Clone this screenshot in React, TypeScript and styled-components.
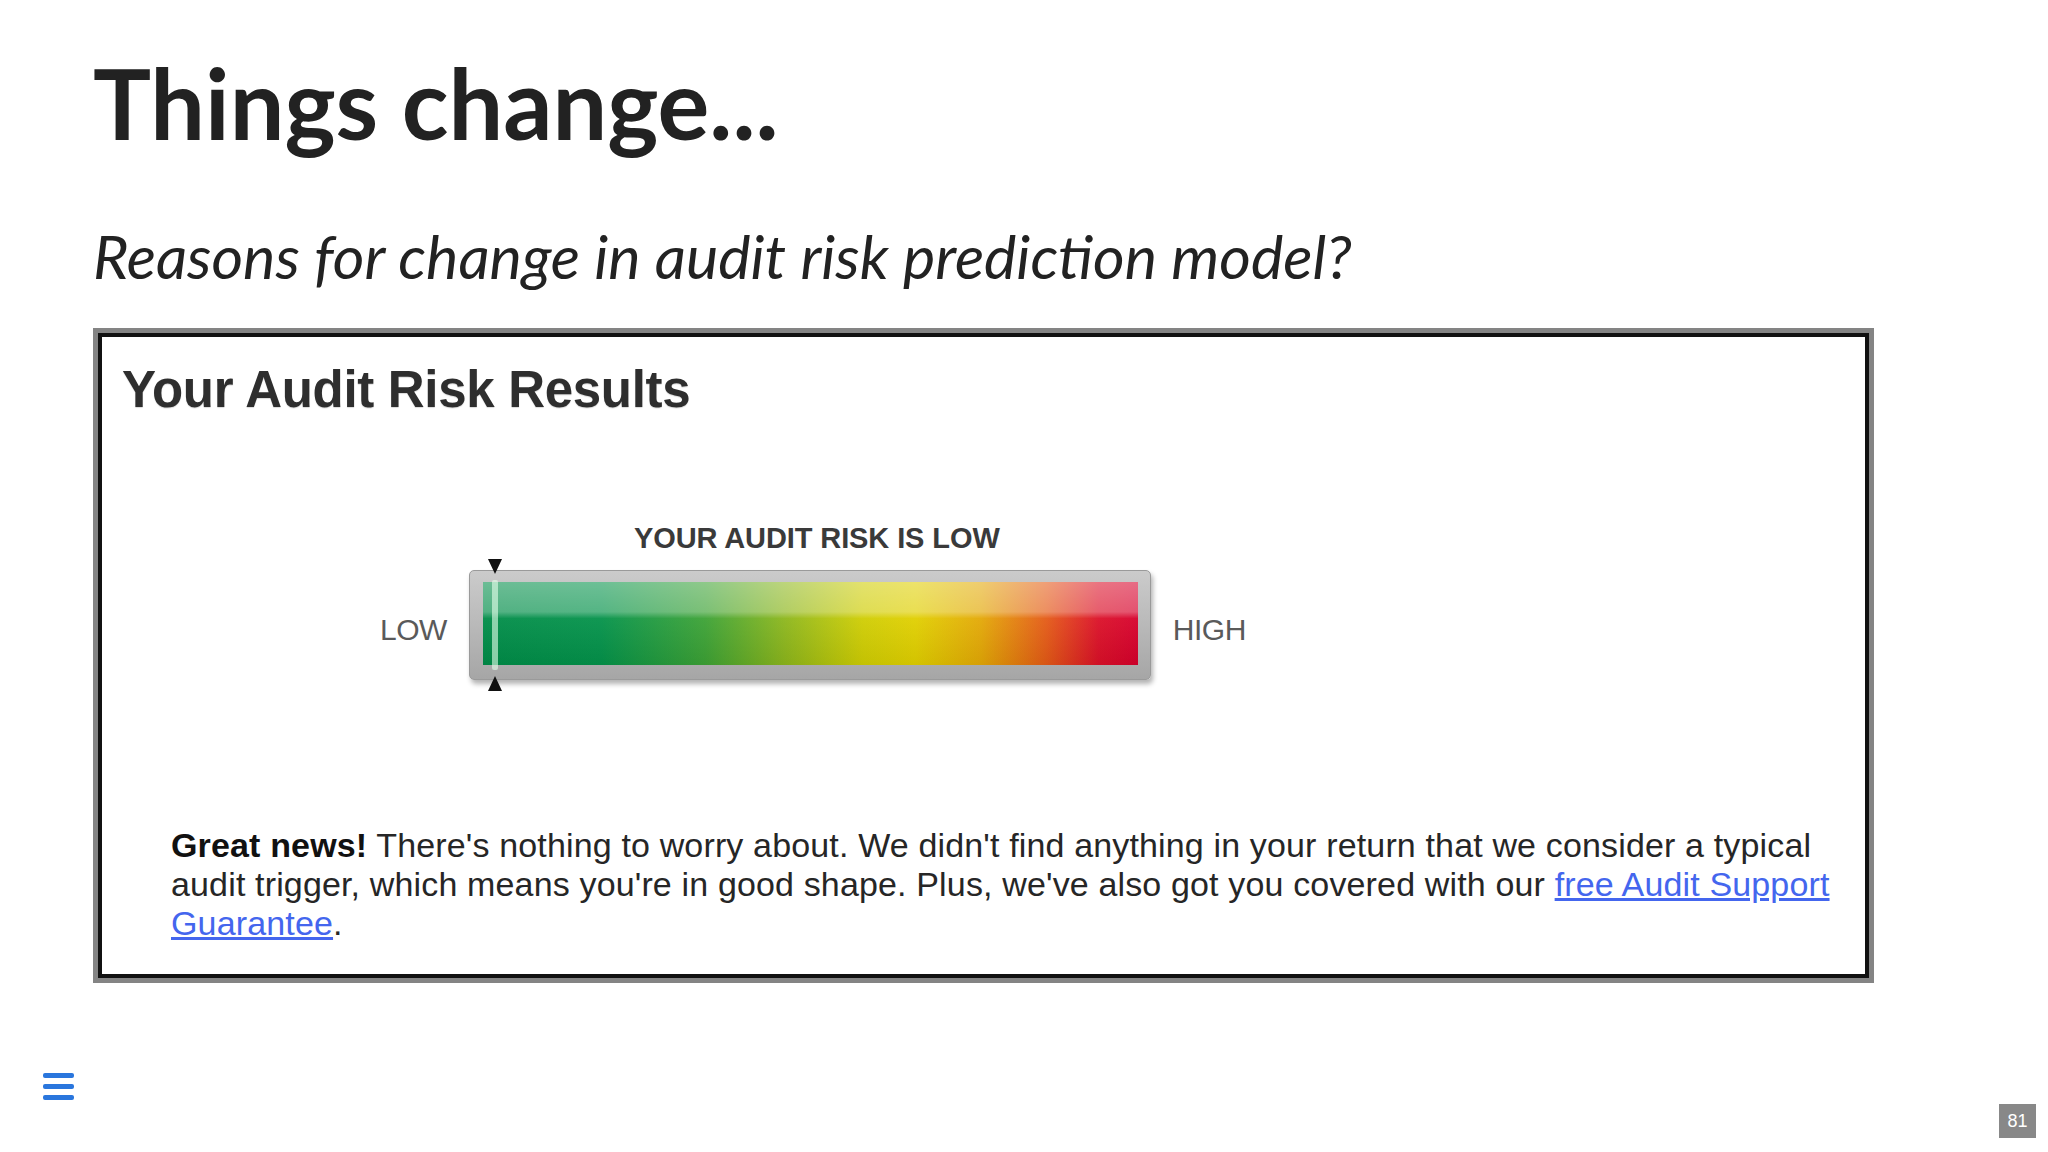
import React from 'react';
import styled, { createGlobalStyle } from 'styled-components';

const GlobalStyle = createGlobalStyle`
  html, body {
    margin: 0;
    padding: 0;
    background: #ffffff;
  }
  body {
    width: 2048px;
    height: 1152px;
    overflow: hidden;
  }
`;

const App = () => {
  return (
    <Slide>
      <GlobalStyle />
      <Title>Things change...</Title>
      <Subtitle>Reasons for change in audit risk prediction model?</Subtitle>
      <Screenshot>
        <ResultsHeading>Your Audit Risk Results</ResultsHeading>
        <Meter>
          <Caption>YOUR AUDIT RISK IS LOW</Caption>
          <MeterRow>
            <EndLabel>LOW</EndLabel>
            <BarFrame>
              <BarFill>
                <Gloss />
              </BarFill>
              <Marker $pos={25}>
                <svg width="16" height="134" viewBox="0 0 16 134">
                  <polygon points="1,1 15,1 8,16" fill="#111" />
                  <rect x="7" y="1" width="2" height="12" fill="#111" />
                  <polygon points="1,133 15,133 8,118" fill="#111" />
                  <rect x="7" y="121" width="2" height="12" fill="#111" />
                </svg>
              </Marker>
            </BarFrame>
            <EndLabel>HIGH</EndLabel>
          </MeterRow>
        </Meter>
        <Message>
          <strong>Great news!</strong> There's nothing to worry about. We didn't find anything in your return that we consider a typical
          <br />
          audit trigger, which means you're in good shape. Plus, we've also got you covered with our{' '}
          <LinkText href="#">free Audit Support</LinkText>
          <br />
          <LinkText href="#">Guarantee</LinkText>.
        </Message>
      </Screenshot>
      <MenuButton aria-label="menu">
        <span />
        <span />
        <span />
      </MenuButton>
      <PageNumber>81</PageNumber>
    </Slide>
  );
};

export default App;

const Slide = styled.div`
  position: relative;
  width: 2048px;
  height: 1152px;
  box-sizing: border-box;
  padding: 45px 0 0 93px;
  display: flex;
  flex-direction: column;
  align-items: flex-start;
  font-family: Lato, 'Noto Sans', sans-serif;
  color: #222;
`;

const Title = styled.h1`
  margin: 0;
  font-size: 97px;
  line-height: 1.2;
  font-weight: 700;
  color: #222;
`;

const Subtitle = styled.p`
  margin: 58px 0 0 0;
  font-size: 61px;
  line-height: 1.2;
  font-style: italic;
  font-weight: 400;
  color: #222;
`;

const Screenshot = styled.div`
  margin-top: 35px;
  width: 1781px;
  height: 655px;
  box-sizing: border-box;
  border: 5px solid #848484;
  padding: 4px;
  display: flex;
  flex-direction: column;
  background: #fff;
  box-shadow: inset 0 0 0 4px #111;
  font-family: 'Liberation Sans', Arial, sans-serif;
`;

const ResultsHeading = styled.h2`
  margin: 25px 0 0 20px;
  font-size: 51px;
  line-height: 56px;
  font-weight: 700;
  letter-spacing: -0.3px;
  color: #2e2e2e;
  text-shadow: 0 1px 1px rgba(0, 0, 0, 0.15);
`;

const Meter = styled.div`
  margin: 104px 0 0 278px;
  display: flex;
  flex-direction: column;
  align-items: flex-start;
`;

const Caption = styled.div`
  margin-left: 254px;
  font-size: 29px;
  line-height: 33px;
  font-weight: 700;
  letter-spacing: -0.1px;
  color: #3a3a3a;
`;

const MeterRow = styled.div`
  margin-top: 15px;
  display: flex;
  align-items: center;
  gap: 22px;
`;

const EndLabel = styled.div`
  font-size: 30px;
  line-height: 34px;
  padding-top: 10px;
  color: #5a5a5a;
  letter-spacing: -0.5px;
`;

const BarFrame = styled.div`
  position: relative;
  width: 682px;
  height: 110px;
  box-sizing: border-box;
  padding: 11px 12px 14px 13px;
  border-radius: 5px;
  background: linear-gradient(to bottom, #cbcbcb 0%, #b9b9b9 50%, #a6a6a6 100%);
  border: 1px solid #9a9a9a;
  box-shadow: 2px 4px 5px rgba(0, 0, 0, 0.3);
`;

const BarFill = styled.div`
  position: relative;
  width: 100%;
  height: 100%;
  overflow: hidden;
  background: linear-gradient(
    to right,
    #008c48 0%,
    #04924a 18%,
    #3da235 34%,
    #8cb61c 46%,
    #cfcd03 58%,
    #e0cf00 66%,
    #e3a806 76%,
    #e45a16 86%,
    #db1028 94%,
    #d6002c 100%
  );
`;

const Gloss = styled.div`
  position: absolute;
  left: 0;
  right: 0;
  top: 0;
  height: 100%;
  background: linear-gradient(
    to bottom,
    rgba(255, 255, 255, 0.42) 0%,
    rgba(255, 255, 255, 0.32) 36%,
    rgba(255, 255, 255, 0.05) 44%,
    rgba(0, 0, 0, 0.06) 100%
  );
`;

const Marker = styled.div<{ $pos: number }>`
  position: absolute;
  left: ${(p) => p.$pos - 8}px;
  top: -13px;
  width: 16px;
  height: 134px;
  &::after {
    content: '';
    position: absolute;
    left: 5px;
    top: 22px;
    width: 6px;
    height: 90px;
    background: rgba(230, 255, 235, 0.6);
    border-radius: 2px;
  }
`;

const Message = styled.p`
  margin: 146px 0 0 69px;
  font-size: 34px;
  line-height: 39px;
  color: #262626;
  letter-spacing: 0.15px;
  strong {
    font-weight: 700;
    color: #111;
  }
`;

const LinkText = styled.a`
  color: #4466ee;
  text-decoration: underline;
`;

const MenuButton = styled.div`
  position: absolute;
  left: 43px;
  top: 1073px;
  width: 31px;
  display: flex;
  flex-direction: column;
  gap: 6px;
  span {
    display: block;
    height: 5px;
    border-radius: 2px;
    background: #2a76dd;
  }
`;

const PageNumber = styled.div`
  position: absolute;
  left: 1999px;
  top: 1104px;
  width: 37px;
  height: 34px;
  display: flex;
  align-items: center;
  justify-content: center;
  background: #888;
  color: #fff;
  font-family: 'Liberation Sans', Arial, sans-serif;
  font-size: 18px;
`;
